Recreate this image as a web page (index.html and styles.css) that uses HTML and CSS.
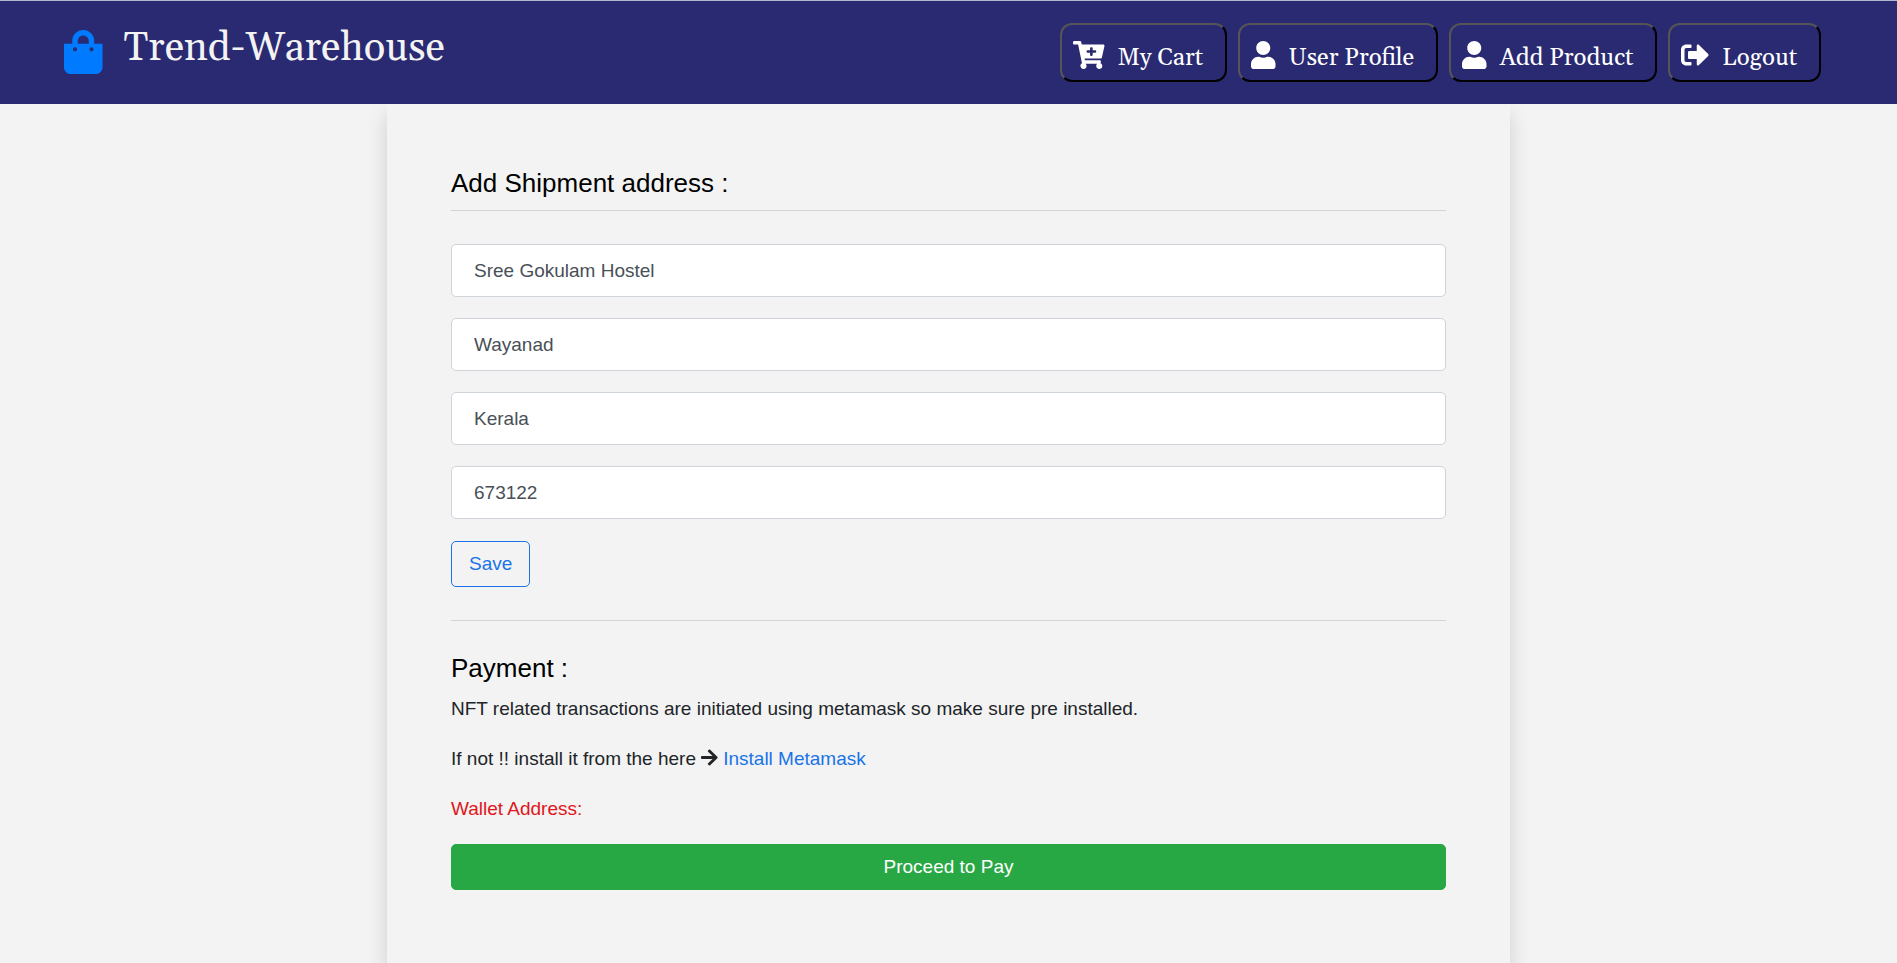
FILE: index.html
```html
<!DOCTYPE html>
<html lang="en">
<head>
<meta charset="utf-8">
<meta name="viewport" content="width=device-width, initial-scale=1">
<title>Trend-Warehouse</title>
<link rel="stylesheet" href="styles.css">
</head>
<body>
<header class="navbar">
  <a class="brand" href="#">
    <svg class="brand-icon" viewBox="0 0 448 512" aria-hidden="true"><path d="M352 160v-32C352 57.42 294.579 0 224 0 153.42 0 96 57.42 96 128v32H0v272c0 44.183 35.817 80 80 80h288c44.183 0 80-35.817 80-80V160h-96zm-192-32c0-35.29 28.71-64 64-64s64 28.71 64 64v32H160v-32zm160 120c-13.255 0-24-10.745-24-24s10.745-24 24-24 24 10.745 24 24-10.745 24-24 24zm-192 0c-13.255 0-24-10.745-24-24s10.745-24 24-24 24 10.745 24 24-10.745 24-24 24z"/></svg>
    <span class="brand-name">Trend-Warehouse</span>
  </a>
  <nav class="nav-actions">
    <button class="nav-button" type="button">
      <svg class="nav-icon" viewBox="0 0 576 512" aria-hidden="true"><path d="M504.717 320H211.572l6.545 32h268.418c15.401 0 26.816 14.301 23.403 29.319l-5.517 24.276C523.112 414.668 536 433.828 536 456c0 31.202-25.519 56.444-56.824 55.994-29.823-.429-54.35-24.631-55.155-54.447-.44-16.287 6.085-31.049 16.803-41.548H231.176C241.553 426.165 248 440.326 248 456c0 31.813-26.528 57.431-58.67 55.938-28.54-1.325-51.751-24.385-53.251-52.917-1.158-22.034 10.436-41.455 28.051-51.586L93.883 64H24C10.745 64 0 53.255 0 40V24C0 10.745 10.745 0 24 0h102.529c11.401 0 21.228 8.021 23.513 19.19L159.208 64H551.99c15.401 0 26.816 14.301 23.403 29.319l-47.273 208C525.637 312.246 515.923 320 504.717 320zM408 168h-48v-40c0-8.837-7.163-16-16-16h-16c-8.837 0-16 7.163-16 16v40h-48c-8.837 0-16 7.163-16 16v16c0 8.837 7.163 16 16 16h48v40c0 8.837 7.163 16 16 16h16c8.837 0 16-7.163 16-16v-40h48c8.837 0 16-7.163 16-16v-16c0-8.837-7.163-16-16-16z"/></svg>
      <span class="nav-label">My Cart</span>
    </button>
    <button class="nav-button" type="button">
      <svg class="nav-icon" viewBox="0 0 448 512" aria-hidden="true"><path d="M224 256c70.7 0 128-57.3 128-128S294.7 0 224 0 96 57.3 96 128s57.3 128 128 128zm89.6 32h-16.7c-22.2 10.2-46.9 16-72.9 16s-50.6-5.8-72.9-16h-16.7C60.2 288 0 348.2 0 422.4V464c0 26.5 21.5 48 48 48h352c26.5 0 48-21.5 48-48v-41.6c0-74.2-60.2-134.4-134.4-134.4z"/></svg>
      <span class="nav-label">User Profile</span>
    </button>
    <button class="nav-button" type="button">
      <svg class="nav-icon" viewBox="0 0 448 512" aria-hidden="true"><path d="M224 256c70.7 0 128-57.3 128-128S294.7 0 224 0 96 57.3 96 128s57.3 128 128 128zm89.6 32h-16.7c-22.2 10.2-46.9 16-72.9 16s-50.6-5.8-72.9-16h-16.7C60.2 288 0 348.2 0 422.4V464c0 26.5 21.5 48 48 48h352c26.5 0 48-21.5 48-48v-41.6c0-74.2-60.2-134.4-134.4-134.4z"/></svg>
      <span class="nav-label">Add Product</span>
    </button>
    <button class="nav-button" type="button">
      <svg class="nav-icon" viewBox="0 0 512 512" aria-hidden="true"><path d="M497 273L329 441c-15 15-41 4.5-41-17v-96H152c-13.3 0-24-10.7-24-24v-96c0-13.3 10.7-24 24-24h136V88c0-21.4 25.9-32 41-17l168 168c9.3 9.4 9.3 24.6 0 34zM192 436v-40c0-6.6-5.4-12-12-12H96c-17.7 0-32-14.3-32-32V160c0-17.7 14.3-32 32-32h84c6.6 0 12-5.4 12-12V76c0-6.6-5.4-12-12-12H96c-53 0-96 43-96 96v192c0 53 43 96 96 96h84c6.6 0 12-5.4 12-12z"/></svg>
      <span class="nav-label">Logout</span>
    </button>
  </nav>
</header>
<main class="panel">
  <form class="address-form">
    <h1 class="heading heading-ruled">Add Shipment address :</h1>
    <input class="field" type="text" aria-label="Address" value="Sree Gokulam Hostel">
    <input class="field" type="text" aria-label="District" value="Wayanad">
    <input class="field" type="text" aria-label="State" value="Kerala">
    <input class="field" type="text" aria-label="PIN code" value="673122">
    <button class="button button-outline" type="button">Save</button>
  </form>
  <section class="payment">
    <h2 class="heading">Payment :</h2>
    <p class="text">NFT related transactions are initiated using metamask so make sure pre installed.</p>
    <p class="text">If not !! install it from the here <svg class="arrow" viewBox="0 0 448 512" aria-hidden="true"><path d="M190.5 66.9l22.2-22.2c9.4-9.4 24.6-9.4 33.9 0L441 239c9.4 9.4 9.4 24.6 0 33.9L246.6 467.3c-9.4 9.4-24.6 9.4-33.9 0l-22.2-22.2c-9.5-9.5-9.3-25 .4-34.3L311.4 296H24c-13.3 0-24-10.7-24-24v-32c0-13.3 10.7-24 24-24h287.4L190.9 101.2c-9.8-9.3-10-24.8-.4-34.3z"/></svg> <a class="link" href="#">Install Metamask</a></p>
    <p class="text wallet">Wallet Address:</p>
    <button class="button button-pay" type="button">Proceed to Pay</button>
  </section>
</main>
</body>
</html>
```
FILE: styles.css
```css
* {
  box-sizing: border-box;
}

body {
  display: flex;
  flex-direction: column;
  min-height: 100vh;
  margin: 0;
  background: #f3f3f3;
  color: #212529;
  font: 19px/29px "Liberation Sans", Arial, sans-serif;
}

.navbar {
  position: relative;
  display: flex;
  flex-wrap: wrap;
  justify-content: space-between;
  align-items: flex-start;
  padding: 22px 76px 22px 64px;
  border-top: 1px solid #b4b7d0;
  background: #2a2a72;
}

.brand {
  display: flex;
  align-items: flex-start;
  gap: 21px;
  color: #f3f3f3;
  text-decoration: none;
}

.brand-icon {
  height: 44px;
  margin-top: 7px;
  fill: #007bff;
}

.brand-name {
  font: 40px/52px Georgia, Gelasio, "Liberation Serif", serif;
}

.nav-actions {
  display: flex;
  flex-wrap: wrap;
  gap: 11px;
}

.nav-button {
  display: flex;
  align-items: flex-end;
  gap: 13px;
  padding: 16px 22px 11px 11px;
  border: 2px solid;
  border-color: #555 #000 #000 #555;
  border-radius: 12px;
  background: transparent;
  color: #fff;
  font: 24px/22px Georgia, Gelasio, "Liberation Serif", serif;
}

.nav-icon {
  height: 28px;
  fill: currentColor;
}

.panel {
  flex: 1;
  width: 100%;
  max-width: 1123px;
  margin: 0 auto;
  padding: 63px 64px 72px;
  box-shadow: 0 10px 19px rgba(0, 0, 0, 0.15);
}

.address-form {
  display: flex;
  flex-direction: column;
  align-items: flex-start;
  gap: 21px;
  padding-bottom: 33px;
  border-bottom: 1px solid #d3d3d3;
}

.heading {
  margin: 0;
  color: #000;
  font-size: 26px;
  font-weight: 400;
  line-height: 32px;
}

.heading-ruled {
  width: 100%;
  margin-bottom: 12px;
  padding-bottom: 11px;
  border-bottom: 1px solid #d3d3d3;
}

.field {
  width: 100%;
  padding: 11px 22px;
  border: 1px solid #ced4da;
  border-radius: 5px;
  background: #fff;
  color: #495057;
  font: inherit;
}

.button {
  padding: 8px 17px;
  border: 1px solid;
  border-radius: 5px;
  font: inherit;
  line-height: 28px;
}

.button-outline {
  margin-top: 1px;
  border-color: #1a73e8;
  background: transparent;
  color: #1a73e8;
}

.payment {
  padding-top: 31px;
}

.text {
  margin: 0 0 21px;
}

.payment .heading {
  margin-bottom: 10px;
}

.arrow {
  height: 19px;
  vertical-align: -2px;
  fill: currentColor;
}

.link {
  color: #1a73e8;
  text-decoration: none;
}

.wallet {
  color: #e0161b;
}

.button-pay {
  width: 100%;
  border-color: #28a745;
  background: #28a745;
  color: #fff;
}
```
